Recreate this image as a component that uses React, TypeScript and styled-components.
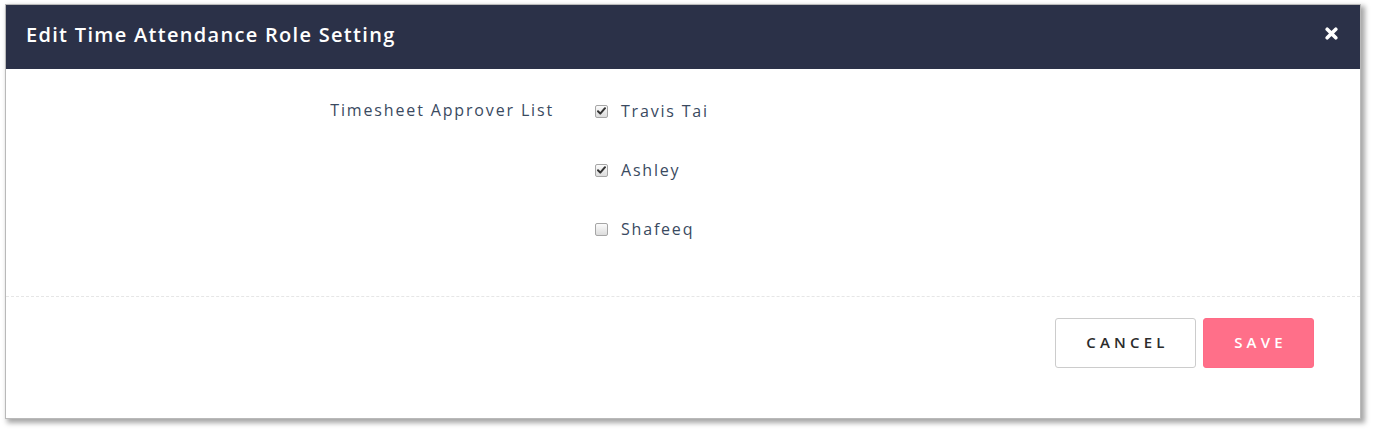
import styled, { createGlobalStyle } from "styled-components";

const GlobalStyle = createGlobalStyle`
  html, body {
    margin: 0;
    padding: 0;
    background: #ffffff;
  }
  body {
    font-family: "Open Sans", "Liberation Sans", sans-serif;
  }
`;

interface Approver {
  id: number;
  name: string;
  checked: boolean;
}

const approvers: Approver[] = [
  { id: 1, name: "Travis Tai", checked: true },
  { id: 2, name: "Ashley", checked: true },
  { id: 3, name: "Shafeeq", checked: false },
];

function CheckBox({ checked }: { checked: boolean }) {
  return (
    <Box>
      {checked && (
        <svg width="9" height="8" viewBox="0 0 9 8">
          <path
            d="M1 4.2 L3.3 6.6 L8 1.2"
            fill="none"
            stroke="#333"
            strokeWidth="2"
            strokeLinecap="round"
            strokeLinejoin="round"
          />
        </svg>
      )}
    </Box>
  );
}

function App() {
  return (
    <>
      <GlobalStyle />
      <Page>
        <Dialog>
          <Header>
            <Title>Edit Time Attendance Role Setting</Title>
            <Close aria-label="Close">
              <svg width="13" height="13" viewBox="0 0 13 13">
                <path
                  d="M2.2 2.2 L10.8 10.8 M10.8 2.2 L2.2 10.8"
                  stroke="#fff"
                  strokeWidth="3.6"
                  strokeLinecap="round"
                />
              </svg>
            </Close>
          </Header>
          <Body>
            <Label>Timesheet Approver List</Label>
            <List>
              {approvers.map((a) => (
                <Option key={a.id}>
                  <CheckBox checked={a.checked} />
                  <span>{a.name}</span>
                </Option>
              ))}
            </List>
          </Body>
          <Footer>
            <Button>CANCEL</Button>
            <Button $primary>SAVE</Button>
          </Footer>
        </Dialog>
      </Page>
    </>
  );
}

export default App;

const Page = styled.div`
  padding: 4px 0 0 5px;
  width: 1374px;
  height: 434px;
  box-sizing: border-box;
`;

const Dialog = styled.div`
  width: 1356px;
  height: 415px;
  box-sizing: border-box;
  border: 1px solid #b9b9b9;
  background: #fff;
  box-shadow: 3px 3px 5px 1px rgba(0, 0, 0, 0.35);
  display: flex;
  flex-direction: column;
`;

const Header = styled.div`
  height: 64px;
  background: #2b3148;
  display: flex;
  align-items: center;
  justify-content: space-between;
  padding: 0 22px 6px 20px;
  box-sizing: border-box;
`;

const Title = styled.h4`
  margin: 0;
  color: #fff;
  font-size: 20px;
  font-weight: 600;
  letter-spacing: 1.3px;
`;

const Close = styled.span`
  display: flex;
  margin-top: -2px;
`;

const Body = styled.div`
  display: grid;
  grid-template-columns: 548px 1fr;
  column-gap: 41px;
  padding: 30px 0 0;
  height: 228px;
  box-sizing: border-box;
  border-bottom: 1px dashed #e6e6e6;
`;

const Label = styled.div`
  text-align: right;
  color: #3a4a5f;
  font-size: 16px;
  letter-spacing: 1.85px;
  line-height: 22px;
`;

const List = styled.div`
  display: flex;
  flex-direction: column;
  gap: 36px;
`;

const Option = styled.label`
  display: flex;
  align-items: center;
  gap: 13px;
  color: #3a4a5f;
  font-size: 16px;
  letter-spacing: 1.8px;
  line-height: 22px;
  padding-top: 1px;
`;

const Box = styled.span`
  width: 11px;
  height: 11px;
  border: 1px solid #a6a6a6;
  border-radius: 2px;
  background: linear-gradient(#fbfbfb, #dcdcdc);
  display: inline-flex;
  align-items: center;
  justify-content: center;
`;

const Footer = styled.div`
  display: flex;
  justify-content: flex-end;
  gap: 7px;
  padding: 21px 46px 0 0;
`;

const Button = styled.button<{ $primary?: boolean }>`
  height: 50px;
  padding: 0 0 3px;
  width: ${(p) => (p.$primary ? "111px" : "141px")};
  border-radius: 3px;
  border: 1px solid ${(p) => (p.$primary ? "#ff6b86" : "#cccccc")};
  background: ${(p) => (p.$primary ? "#ff6f89" : "#fff")};
  color: ${(p) => (p.$primary ? "#fff" : "#2b2b2b")};
  font-family: "Open Sans", sans-serif;
  font-size: 15px;
  font-weight: 600;
  letter-spacing: 4.2px;
  text-indent: 4px;
`;
